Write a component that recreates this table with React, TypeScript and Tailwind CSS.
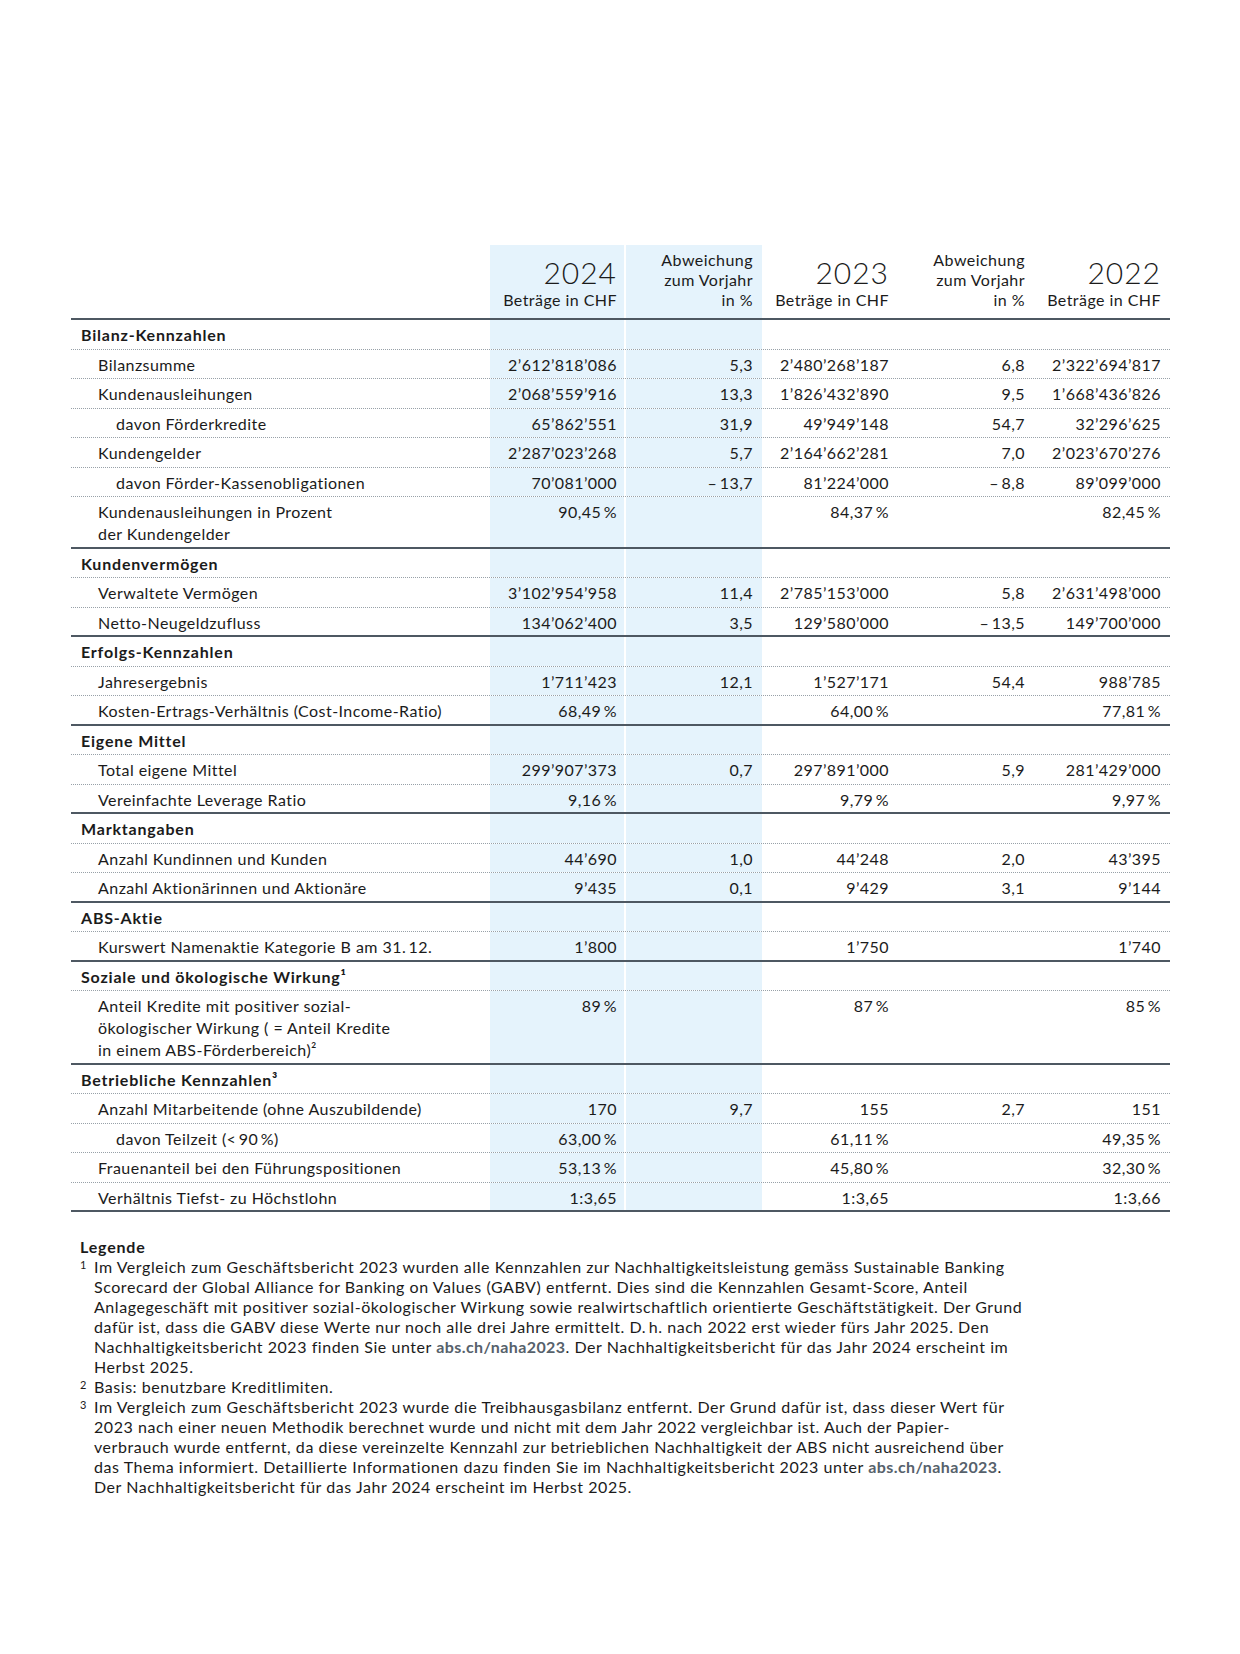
import React from "react";

type Row = {
  label: string[];
  level: 0 | 1 | 2;
  values?: string[];
  last?: boolean;
};

type Section = {
  title: string;
  rows: Row[];
};

const TS = "\u2009";

const sections: Section[] = [
  {
    title: "Bilanz-Kennzahlen",
    rows: [
      { label: ["Bilanzsumme"], level: 1, values: ["2’612’818’086", "5,3", "2’480’268’187", "6,8", "2’322’694’817"] },
      { label: ["Kundenausleihungen"], level: 1, values: ["2’068’559’916", "13,3", "1’826’432’890", "9,5", "1’668’436’826"] },
      { label: ["davon Förderkredite"], level: 2, values: ["65’862’551", "31,9", "49’949’148", "54,7", "32’296’625"] },
      { label: ["Kundengelder"], level: 1, values: ["2’287’023’268", "5,7", "2’164’662’281", "7,0", "2’023’670’276"] },
      { label: ["davon Förder-Kassenobligationen"], level: 2, values: ["70’081’000", `–${TS}13,7`, "81’224’000", `–${TS}8,8`, "89’099’000"] },
      { label: ["Kundenausleihungen in Prozent", "der Kundengelder"], level: 1, values: [`90,45${TS}%`, "", `84,37${TS}%`, "", `82,45${TS}%`] },
    ],
  },
  {
    title: "Kundenvermögen",
    rows: [
      { label: ["Verwaltete Vermögen"], level: 1, values: ["3’102’954’958", "11,4", "2’785’153’000", "5,8", "2’631’498’000"] },
      { label: ["Netto-Neugeldzufluss"], level: 1, values: ["134’062’400", "3,5", "129’580’000", `–${TS}13,5`, "149’700’000"] },
    ],
  },
  {
    title: "Erfolgs-Kennzahlen",
    rows: [
      { label: ["Jahresergebnis"], level: 1, values: ["1’711’423", "12,1", "1’527’171", "54,4", "988’785"] },
      { label: ["Kosten-Ertrags-Verhältnis (Cost-Income-Ratio)"], level: 1, values: [`68,49${TS}%`, "", `64,00${TS}%`, "", `77,81${TS}%`] },
    ],
  },
  {
    title: "Eigene Mittel",
    rows: [
      { label: ["Total eigene Mittel"], level: 1, values: ["299’907’373", "0,7", "297’891’000", "5,9", "281’429’000"] },
      { label: ["Vereinfachte Leverage Ratio"], level: 1, values: [`9,16${TS}%`, "", `9,79${TS}%`, "", `9,97${TS}%`] },
    ],
  },
  {
    title: "Marktangaben",
    rows: [
      { label: ["Anzahl Kundinnen und Kunden"], level: 1, values: ["44’690", "1,0", "44’248", "2,0", "43’395"] },
      { label: ["Anzahl Aktionärinnen und Aktionäre"], level: 1, values: ["9’435", "0,1", "9’429", "3,1", "9’144"] },
    ],
  },
  {
    title: "ABS-Aktie",
    rows: [
      { label: [`Kurswert Namenaktie Kategorie B am 31.${TS}12.`], level: 1, values: ["1’800", "", "1’750", "", "1’740"] },
    ],
  },
  {
    title: "Soziale und ökologische Wirkung¹",
    rows: [
      {
        label: ["Anteil Kredite mit positiver sozial-", "ökologischer Wirkung ( = Anteil Kredite", "in einem ABS-Förderbereich)²"],
        level: 1,
        values: [`89${TS}%`, "", `87${TS}%`, "", `85${TS}%`],
      },
    ],
  },
  {
    title: "Betriebliche Kennzahlen³",
    rows: [
      { label: ["Anzahl Mitarbeitende (ohne Auszubildende)"], level: 1, values: ["170", "9,7", "155", "2,7", "151"] },
      { label: [`davon Teilzeit (<${TS}90${TS}%)`], level: 2, values: [`63,00${TS}%`, "", `61,11${TS}%`, "", `49,35${TS}%`] },
      { label: ["Frauenanteil bei den Führungspositionen"], level: 1, values: [`53,13${TS}%`, "", `45,80${TS}%`, "", `32,30${TS}%`] },
      { label: ["Verhältnis Tiefst- zu Höchstlohn"], level: 1, values: ["1:3,65", "", "1:3,65", "", "1:3,66"] },
    ],
  },
];

const GRID = "grid grid-cols-[419px_136px_136px_136px_136px_136px]";
const BLUE = "bg-[#e5f3fc]";

function ValueCells({ values, cell }: { values: string[]; cell: string }) {
  return (
    <>
      <div className={`${cell} ${BLUE} border-r-2 border-white pr-[7px] text-right`}>{values[0]}</div>
      <div className={`${cell} ${BLUE} pr-[9px] text-right`}>{values[1]}</div>
      <div className={`${cell} pr-[9px] text-right`}>{values[2]}</div>
      <div className={`${cell} pr-[9px] text-right`}>{values[3]}</div>
      <div className={`${cell} pr-[9px] text-right`}>{values[4]}</div>
    </>
  );
}

function TableRow({ row }: { row: Row }) {
  const indent =
    row.level === 0 ? "pl-[10px] font-bold tracking-[0.8px]" : row.level === 1 ? "pl-[27px]" : "pl-[45px]";
  const border = row.last ? "border-b-2 border-solid border-[#4e5862]" : "border-b border-dotted border-[#98a1a8]";
  const cell = row.last ? "pt-[4px] pb-[1.5px] leading-[22px]" : "pt-[4px] pb-[2.5px] leading-[22px]";
  return (
    <div className={`${GRID} ${border}`}>
      <div className={`${cell} ${indent}`}>
        {row.label.map((l, i) => (
          <div key={i}>{l}</div>
        ))}
      </div>
      <ValueCells values={row.values ?? ["", "", "", "", ""]} cell={cell} />
    </div>
  );
}

function HeaderCell({ big, sub, blue, gap }: { big?: string; sub: string[]; blue?: boolean; gap?: boolean }) {
  return (
    <div
      className={`flex flex-col items-end justify-end pb-[8px] text-right ${blue ? BLUE : ""} ${
        gap ? "border-r-2 border-white pr-[7px]" : "pr-[9px]"
      }`}
    >
      {big && <div className="text-[30px] font-light leading-[35px] tracking-[1px]">{big}</div>}
      {sub.map((s, i) => (
        <div key={i} className="leading-[20px]">
          {s}
        </div>
      ))}
    </div>
  );
}

function Link({ children }: { children: React.ReactNode }) {
  return <span className="font-bold tracking-[0.4px] text-[#56616b]">{children}</span>;
}

function Footnote({ mark, children }: { mark: string; children: React.ReactNode }) {
  return (
    <div className="flex">
      <span className="w-[14px] shrink-0 pt-[1px] text-[11px] leading-[14px]">{mark}</span>
      <div>{children}</div>
    </div>
  );
}

export default function App() {
  return (
    <div className="min-h-[1654px] w-[1240px] bg-white pl-[71px] pt-[245px] font-['Lato','Liberation_Sans',sans-serif] text-[16px] tracking-[0.45px] text-[#1b1b1b]">
      <div className="w-[1099px]">
        <div className={`${GRID} h-[75px] border-b-2 border-[#4e5862]`}>
          <div />
          <HeaderCell big="2024" sub={["Beträge in CHF"]} blue gap />
          <HeaderCell sub={["Abweichung", "zum Vorjahr", "in %"]} blue />
          <HeaderCell big="2023" sub={["Beträge in CHF"]} />
          <HeaderCell sub={["Abweichung", "zum Vorjahr", "in %"]} />
          <HeaderCell big="2022" sub={["Beträge in CHF"]} />
        </div>

        {sections.map((sec) => (
          <div key={sec.title}>
            <TableRow row={{ label: [sec.title], level: 0 }} />
            {sec.rows.map((r, i) => (
              <TableRow key={i} row={{ ...r, last: i === sec.rows.length - 1 }} />
            ))}
          </div>
        ))}
      </div>

      <div className="mt-[25px] whitespace-nowrap pl-[9px] leading-[20px] tracking-[0.55px]">
        <div className="font-bold tracking-[0.8px]">Legende</div>
        <Footnote mark="1">
          <div>Im Vergleich zum Geschäftsbericht 2023 wurden alle Kennzahlen zur Nachhaltigkeitsleistung gemäss Sustainable Banking</div>
          <div>Scorecard der Global Alliance for Banking on Values (GABV) entfernt. Dies sind die Kennzahlen Gesamt-Score, Anteil</div>
          <div>Anlagegeschäft mit positiver sozial-ökologischer Wirkung sowie realwirtschaftlich orientierte Geschäftstätigkeit. Der Grund</div>
          <div>dafür ist, dass die GABV diese Werte nur noch alle drei Jahre ermittelt. D.{TS}h. nach 2022 erst wieder fürs Jahr 2025. Den</div>
          <div>
            Nachhaltigkeitsbericht 2023 finden Sie unter <Link>abs.ch/naha2023</Link>. Der Nachhaltigkeitsbericht für das Jahr 2024 erscheint im
          </div>
          <div>Herbst 2025.</div>
        </Footnote>
        <Footnote mark="2">
          <div>Basis: benutzbare Kreditlimiten.</div>
        </Footnote>
        <Footnote mark="3">
          <div>Im Vergleich zum Geschäftsbericht 2023 wurde die Treibhausgasbilanz entfernt. Der Grund dafür ist, dass dieser Wert für</div>
          <div>2023 nach einer neuen Methodik berechnet wurde und nicht mit dem Jahr 2022 vergleichbar ist. Auch der Papier-</div>
          <div>verbrauch wurde entfernt, da diese vereinzelte Kennzahl zur betrieblichen Nachhaltigkeit der ABS nicht ausreichend über</div>
          <div>
            das Thema informiert. Detaillierte Informationen dazu finden Sie im Nachhaltigkeitsbericht 2023 unter <Link>abs.ch/naha2023</Link>.
          </div>
          <div>Der Nachhaltigkeitsbericht für das Jahr 2024 erscheint im Herbst 2025.</div>
        </Footnote>
      </div>
    </div>
  );
}
